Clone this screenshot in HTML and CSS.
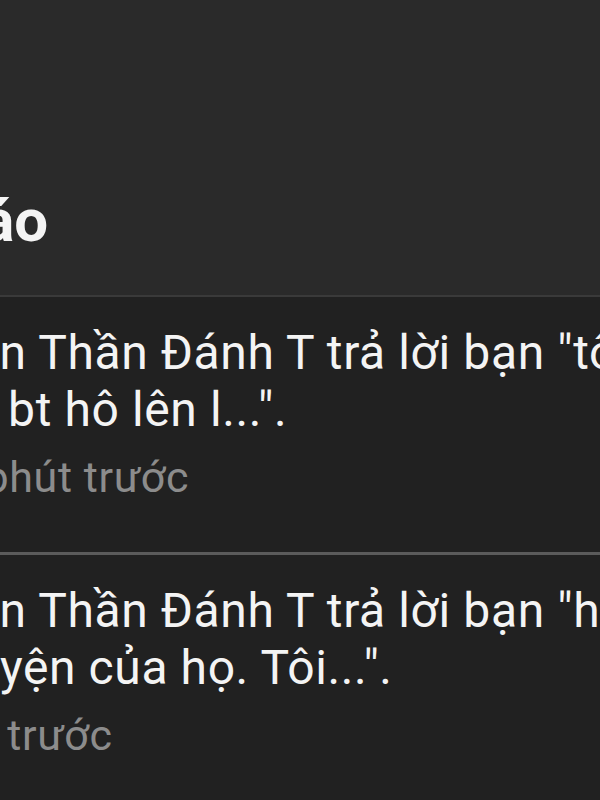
FILE: index.html
```html
<!DOCTYPE html>
<html lang="vi">
<head>
    <meta charset="UTF-8">
    <meta name="viewport" content="width=device-width, initial-scale=1.0">
    <title>Thông báo</title>
    <link rel="stylesheet" href="styles.css">
</head>
<body>
    <header class="top">
        <h1 class="title">Thông báo</h1>
    </header>
    <ul class="notes">
        <li class="note">
            <p class="note-text">Nguyễn Thần Đánh T trả lời bạn "tôi thấy<br>không bt hô lên l...".</p>
            <div class="note-time">
                <svg class="note-icon" viewBox="0 0 24 24"><path d="M4 5h16v11H9l-5 4z"/></svg>
                120 phút trước
            </div>
        </li>
        <li class="note">
            <p class="note-text">Nguyễn Thần Đánh T trả lời bạn "hay nghe<br>từ chuyện của họ. Tôi...".</p>
            <div class="note-time">
                <svg class="note-icon" viewBox="0 0 24 24"><path d="M4 5h16v11H9l-5 4z"/></svg>
                1 giờ trước
            </div>
        </li>
    </ul>
</body>
</html>
```

FILE: styles.css
```css
html, body {
    margin: 0;
    padding: 0;
    background: #212121;
    overflow: hidden;
}
body {
    width: 600px;
    height: 800px;
    font-family: Roboto, "Noto Sans", sans-serif;
    color: #f4f4f4;
}
.top {
    background: #2a2a2a;
    height: 297px;
    padding-top: 186px;
    border-bottom: 2px solid #3a3a3a;
    box-sizing: border-box;
}
.title {
    margin: 0 0 0 -239px;
    font-size: 60px;
    line-height: 70px;
    font-weight: 700;
    white-space: nowrap;
}
.notes {
    list-style: none;
    margin: 0;
    padding: 0;
}
.note {
    margin-left: -139px;
    padding: 27px 0 50px;
    border-bottom: 3px solid #5b5b5b;
}
.note-text {
    margin: 0;
    font-size: 48px;
    line-height: 57px;
    letter-spacing: 0.6px;
    white-space: nowrap;
}
.note-time {
    display: flex;
    align-items: center;
    margin-top: 14px;
    font-size: 43px;
    line-height: 50px;
    letter-spacing: 0.6px;
    color: #8c8c8c;
    white-space: nowrap;
}
.note-icon {
    width: 28px;
    height: 28px;
    margin-right: 10px;
    fill: #8c8c8c;
    flex: none;
}
```
